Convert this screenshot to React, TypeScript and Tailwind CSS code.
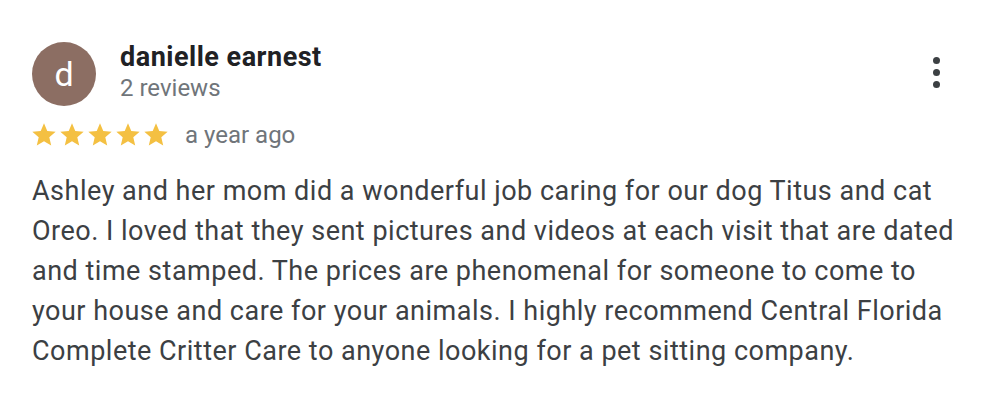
import React from 'react';

const Star: React.FC = () => (
  <svg width="28" height="28" viewBox="0 0 24 24">
    <path
      fill="#f4c042"
      d="M12 17.27L18.18 21l-1.64-7.03L22 9.24l-7.19-.61L12 2 9.19 8.63 2 9.24l5.46 4.73L5.82 21z"
    />
  </svg>
);

const App: React.FC = () => {
  return (
    <div className="w-[988px] h-[414px] bg-white font-['Roboto',sans-serif] px-8 pt-[42px]">
      <div className="flex items-start">
        <div className="w-16 h-16 rounded-full bg-[#8c6e63] flex items-center justify-center text-white text-[34px] leading-none">
          d
        </div>
        <div className="ml-[24px] flex-1 -mt-[1px]">
          <div className="text-[27px] font-bold text-[#202124] leading-[32px] tracking-[0.5px]">danielle earnest</div>
          <div className="text-[24px] text-[#70757a] leading-[30px]">2 reviews</div>
        </div>
        <div className="mr-[16px] mt-[15px] flex flex-col items-center gap-[5px]">
          <span className="w-[7px] h-[7px] rounded-full bg-[#3c4043]" />
          <span className="w-[7px] h-[7px] rounded-full bg-[#3c4043]" />
          <span className="w-[7px] h-[7px] rounded-full bg-[#3c4043]" />
        </div>
      </div>
      <div className="flex items-center mt-[14px] -ml-[2px]">
        <div className="flex">
          <Star />
          <Star />
          <Star />
          <Star />
          <Star />
        </div>
        <span className="ml-[15px] text-[24px] text-[#70757a] leading-[30px]">a year ago</span>
      </div>
      <p className="mt-[21px] text-[27px] leading-[40px] tracking-[0.5px] text-[#3c4043] w-[925px]">
        Ashley and her mom did a wonderful job caring for our dog Titus and cat Oreo. I loved that they sent
        pictures and videos at each visit that are dated and time stamped. The prices are phenomenal for
        someone to come to your house and care for your animals. I highly recommend Central Florida
        Complete Critter Care to anyone looking for a pet sitting company.
      </p>
    </div>
  );
};

export default App;
